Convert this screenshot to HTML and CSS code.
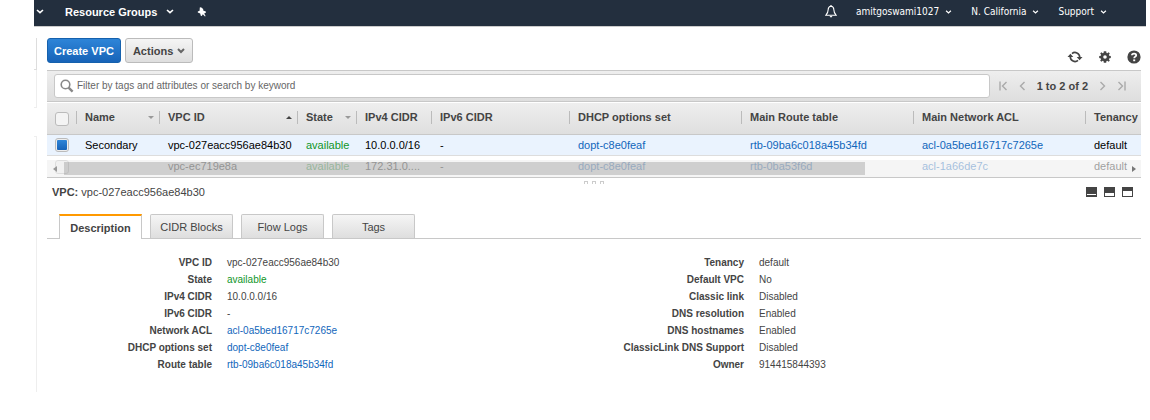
FILE: index.html
```html
<!DOCTYPE html>
<html lang="en">
<head>
<meta charset="utf-8">
<title>VPC Dashboard</title>
<link rel="stylesheet" href="styles.css">
</head>
<body>
<div class="page">
  <header class="topbar">
    <nav class="nav-left">
      <svg class="caret" viewBox="0 0 8 5"><path d="M1 1l3 2.6L7 1"/></svg>
      <button class="nav-main" type="button">Resource Groups <svg class="caret" viewBox="0 0 8 5"><path d="M1 1l3 2.6L7 1"/></svg></button>
      <button class="pin" type="button" aria-label="Pin shortcuts"><svg width="10" height="10" viewBox="0 0 10 10"><path d="M2.8 0.6L4 0.2 6.2 2 6.200 3.600 8.800 4.400 9 5.400 7.200 6.400 8.600 9 8 9.400 5.800 7.200 4.800 9 3.800 8.800 3.200 6.400 0.800 5.400 0.800 4.400 2.600 3.800z" fill="#fff"/></svg></button>
    </nav>
    <nav class="nav-right">
      <button class="bell" type="button" aria-label="Notifications"><svg width="12" height="13" viewBox="0 0 12 13"><path d="M6 1.2C3.9 1.4 3.2 3 3.2 4.6 3.2 7.2 2.4 8.6 0.8 10.3H11.2C9.6 8.6 8.8 7.2 8.8 4.6 8.8 3 8.1 1.4 6 1.2z" fill="none" stroke="#fff" stroke-width="1.1"/><path d="M4.5 11h3L6 12.8z" fill="#fff"/><path d="M5.4 0h1.2v1.6H5.4z" fill="#fff"/></svg></button>
      <button type="button">amitgoswami1027 <svg class="caret small" viewBox="0 0 8 5"><path d="M1 1l3 2.6L7 1"/></svg></button>
      <button type="button">N. California <svg class="caret small" viewBox="0 0 8 5"><path d="M1 1l3 2.6L7 1"/></svg></button>
      <button type="button">Support <svg class="caret small" viewBox="0 0 8 5"><path d="M1 1l3 2.6L7 1"/></svg></button>
    </nav>
  </header>
  <div class="body">
    <aside class="gutter"><div class="g-top"></div><div class="g-mid"></div><div class="g-rest"></div></aside>
    <main class="main">
      <div class="actions">
        <button class="btn primary" type="button">Create VPC</button>
        <button class="btn" type="button">Actions <svg width="8" height="6" viewBox="0 0 8 6"><path d="M1 1l3 3 3-3" fill="none" stroke="#666" stroke-width="2"/></svg></button>
        <div class="tools">
          <button type="button" aria-label="Refresh"><svg width="16" height="14" viewBox="0 0 16 14"><path d="M5 3.600A4.700 4.700 0 0 1 12.700 7M11 10.400A4.700 4.700 0 0 1 3.300 7" fill="none" stroke="#444" stroke-width="1.700"/><path d="M9.700 7h5.800l-2.900 3.200zM.5 7h5.800L3.400 3.800z" fill="#444"/></svg></button>
          <button type="button" aria-label="Settings"><svg width="12" height="12" viewBox="0 0 12 12"><path fill="#444" fill-rule="evenodd" d="M4.8 0.3h2.4l.3 1.6.8.3 1.4-.9 1.1 1.1-.9 1.4.3.9 1.6.2v2.2l-1.6.3-.3.9.9 1.3-1.1 1.1-1.4-.9-.8.3-.3 1.6H4.8l-.3-1.6-.8-.3-1.4.9-1.1-1.1.9-1.3-.3-.9L.2 7.1V4.9l1.6-.2.3-.9-.9-1.400 1.100-1.100 1.400.9.800-.3zM6 4.200a1.800 1.800 0 1 0 0 3.600 1.800 1.800 0 0 0 0-3.600z"/></svg></button>
          <button type="button" aria-label="Help"><svg width="14" height="14" viewBox="0 0 14 14"><circle cx="7" cy="7" r="6.6" fill="#444"/><path d="M4.900 5.300C5 3 9.200 3 9.200 5.200 9.200 6.700 7.200 6.600 7.200 8.300" fill="none" stroke="#fff" stroke-width="1.800"/><path d="M6.200 9.400h2v1.800h-2z" fill="#fff"/></svg></button>
        </div>
      </div>
      <div class="filter">
        <label class="search">
          <svg width="14" height="14" viewBox="0 0 14 14"><circle cx="5.500" cy="5.500" r="4.300" fill="none" stroke="#888" stroke-width="1.600"/><path d="M8.600 8.600l4 4" stroke="#888" stroke-width="2.400"/></svg>
          <input type="text" aria-label="Filter" placeholder="Filter by tags and attributes or search by keyword">
        </label>
        <div class="pager">
          <button type="button" aria-label="First page"><svg width="9" height="10" viewBox="0 0 9 10"><path d="M1 .5v9M7.500 1L3.500 5l4 4"/></svg></button>
          <button type="button" aria-label="Previous page"><svg width="7" height="10" viewBox="0 0 7 10"><path d="M5.500 1L1.500 5l4 4"/></svg></button>
          <span>1 to 2 of 2</span>
          <button type="button" aria-label="Next page"><svg width="7" height="10" viewBox="0 0 7 10"><path d="M1.500 1l4 4-4 4"/></svg></button>
          <button type="button" aria-label="Last page"><svg width="9" height="10" viewBox="0 0 9 10"><path d="M8 .5v9M1.500 1l4 4-4 4"/></svg></button>
        </div>
      </div>
      <div class="grid">
        <table class="vpcs">
          <colgroup><col class="c-check"><col class="c-name"><col class="c-id"><col class="c-state"><col class="c-v4"><col class="c-id"><col class="c-wide"><col class="c-wide"><col class="c-wide"><col></colgroup>
          <thead><tr>
            <th class="check"><input type="checkbox" aria-label="Select all"></th>
            <th><div>Name<i class="down"></i></div></th>
            <th><div>VPC ID<i class="up"></i></div></th>
            <th><div>State<i class="down"></i></div></th>
            <th><div>IPv4 CIDR</div></th>
            <th><div>IPv6 CIDR</div></th>
            <th><div>DHCP options set</div></th>
            <th><div>Main Route table</div></th>
            <th><div>Main Network ACL</div></th>
            <th><div>Tenancy</div></th>
          </tr></thead>
          <tbody>
            <tr class="selected"><td class="check"><input type="checkbox" aria-label="Select Secondary" checked></td><td>Secondary</td><td>vpc-027eacc956ae84b30</td><td class="ok">available</td><td>10.0.0.0/16</td><td>-</td><td><a href="#">dopt-c8e0feaf</a></td><td><a href="#">rtb-09ba6c018a45b34fd</a></td><td><a href="#">acl-0a5bed16717c7265e</a></td><td>default</td></tr>
            <tr><td class="check"><input type="checkbox" aria-label="Select vpc-ec719e8a"></td><td></td><td>vpc-ec719e8a</td><td class="ok">available</td><td>172.31.0....</td><td>-</td><td><a href="#">dopt-c8e0feaf</a></td><td><a href="#">rtb-0ba53f6d</a></td><td><a href="#">acl-1a66de7c</a></td><td>default</td></tr>
          </tbody>
        </table>
        <div class="scroll"><i class="s-left"></i><div class="thumb"></div><i class="s-right"></i></div>
      </div>
      <div class="grip"><i></i><i></i><i></i></div>
      <div class="title">
        <h1>VPC: <span>vpc-027eacc956ae84b30</span></h1>
        <div class="panes">
          <button type="button" aria-label="Small pane"><svg width="11" height="10" viewBox="0 0 11 10"><path d="M0 0h11v10H0z" fill="#444"/><path d="M1 7h9v1H1z" fill="#fff"/></svg></button>
          <button type="button" aria-label="Half pane"><svg width="11" height="10" viewBox="0 0 11 10"><path d="M0 0h11v10H0z" fill="#444"/><path d="M1 6h9v3H1z" fill="#fff"/></svg></button>
          <button type="button" aria-label="Full pane"><svg width="11" height="10" viewBox="0 0 11 10"><path d="M0 0h11v10H0z" fill="#444"/><path d="M1 4h9v5H1z" fill="#fff"/></svg></button>
        </div>
      </div>
      <div class="tabs" role="tablist">
        <button class="active" role="tab" type="button">Description</button>
        <button role="tab" type="button">CIDR Blocks</button>
        <button role="tab" type="button">Flow Logs</button>
        <button role="tab" type="button">Tags</button>
      </div>
      <div class="details">
        <dl>
          <dt>VPC ID</dt><dd>vpc-027eacc956ae84b30</dd>
          <dt>State</dt><dd class="ok">available</dd>
          <dt>IPv4 CIDR</dt><dd>10.0.0.0/16</dd>
          <dt>IPv6 CIDR</dt><dd>-</dd>
          <dt>Network ACL</dt><dd><a href="#">acl-0a5bed16717c7265e</a></dd>
          <dt>DHCP options set</dt><dd><a href="#">dopt-c8e0feaf</a></dd>
          <dt>Route table</dt><dd><a href="#">rtb-09ba6c018a45b34fd</a></dd>
        </dl>
        <dl>
          <dt>Tenancy</dt><dd>default</dd>
          <dt>Default VPC</dt><dd>No</dd>
          <dt>Classic link</dt><dd>Disabled</dd>
          <dt>DNS resolution</dt><dd>Enabled</dd>
          <dt>DNS hostnames</dt><dd>Enabled</dd>
          <dt>ClassicLink DNS Support</dt><dd>Disabled</dd>
          <dt>Owner</dt><dd>914415844393</dd>
        </dl>
      </div>
    </main>
  </div>
</div>
</body>
</html>
```

FILE: styles.css
```css
* { box-sizing: border-box; }
body { margin: 0; background: #fff; color: #444; font: 11px/16px "Liberation Sans", Arial, sans-serif; }
button { margin: 0; padding: 0; border: 0; background: none; color: inherit; font: inherit; cursor: pointer; }
svg { display: block; flex: none; }
a { color: #1166bb; text-decoration: none; }
.ok { color: #109628; }

.page { padding: 0 4px 0 34px; }
.topbar { display: flex; justify-content: space-between; height: 27px; padding: 0 39px 3px 2px; background: #232f3e; border-bottom: 1px solid #ccc; color: #fff; }
.nav-left, .nav-right, .nav-left button, .nav-right button { display: flex; align-items: center; }
.caret { width: 8px; height: 5px; fill: none; stroke: #fff; stroke-width: 1.6; }
.caret.small { width: 7px; height: 4px; }
.nav-main { gap: 9px; margin-left: 21px; font-weight: bold; }
.pin { margin-left: 23px; }
.nav-right { gap: 19px; font: 10px/16px "DejaVu Sans Condensed", "DejaVu Sans", sans-serif; }
.nav-right button { gap: 6px; }

.body { display: flex; gap: 10px; padding-right: 5px; }
.gutter { display: flex; flex-direction: column; flex: none; width: 3px; padding-top: 11px; }
.g-top { height: 32px; border: solid #ddd; border-width: 0 1px 1px 0; }
.g-mid { height: 38px; border: solid #eee; border-width: 0 1px 1px 0; }
.g-rest { flex: 1; margin-top: 28px; border: solid #eee; border-width: 1px 1px 0 0; }
.main { flex: 1; min-width: 0; }

.actions { display: flex; gap: 4px; height: 43px; padding-top: 11px; }
.btn { display: flex; align-items: center; justify-content: center; gap: 4px; height: 25px; padding: 0 7px; border: 1px solid #bbb; border-radius: 3px; background: linear-gradient(#f5f5f5, #dedede); font-weight: bold; }
.btn.primary { padding: 0 6px; border-color: #1561ad; background: linear-gradient(#2e85d8, #1763b8); color: #fff; }
.tools { display: flex; align-items: center; gap: 16px; margin-left: auto; padding-top: 6px; }

.filter { display: flex; align-items: center; height: 32px; padding: 0 15px 0 7px; border: solid #c8c8c8; border-width: 1px 0; background: linear-gradient(#eee, #dedede); }
.search { display: flex; flex: 1; align-items: center; gap: 3px; height: 24px; padding: 0 5px; border: 1px solid #c8c8c8; border-radius: 3px; background: #fff; }
.search input { flex: 1; min-width: 0; padding: 0; border: 0; outline: 0; background: none; color: #444; font: 10px/16px "Liberation Sans", Arial, sans-serif; }
.search input::placeholder { color: #666; }
.pager { display: flex; align-items: center; gap: 11px; padding-left: 9px; font-weight: bold; }
.pager path { fill: none; stroke: #aaa; stroke-width: 1.4; }

.grid { position: relative; margin-top: 1px; border-bottom: 1px solid #c8c8c8; }
.vpcs { width: 100%; table-layout: fixed; border-collapse: separate; border-spacing: 0; color: #000; white-space: nowrap; }
.c-check { width: 29px; }
.c-name { width: 83px; }
.c-id { width: 138px; }
.c-state { width: 59px; }
.c-v4 { width: 75px; }
.c-wide { width: 172px; }
.vpcs thead tr { background: linear-gradient(#eee, #dedede); }
.vpcs th { height: 32px; padding: 0 0 3px; border-bottom: 1px solid #c8c8c8; color: #444; text-align: left; }
.vpcs th div { display: flex; align-items: center; justify-content: space-between; height: 13px; padding: 0 5px 0 8px; border-left: 1px solid #bbb; }
.vpcs td { height: 21px; padding: 0 0 0 9px; border-bottom: 1px solid #ddd; line-height: 14px; }
.vpcs tbody tr:last-child td { padding-bottom: 2px; border-bottom: 0; }
.vpcs td.check, .vpcs tbody tr:last-child td.check { padding: 0 0 0 8px; }
.vpcs th.check { padding: 0 0 0 8px; }
.selected { background: #eaf3fe; }
.vpcs input { display: block; width: 14px; height: 14px; margin: 0; appearance: none; border: 1px solid #bbb; border-radius: 3px; background: #f4f4f4; }
.vpcs input:checked { padding: 1px; border-color: #bbb; background: linear-gradient(#2e85d8, #1763b8) content-box, #eee; }
.down, .up { border: 3px solid transparent; }
.down { border-top-color: #999; border-bottom: 0; }
.up { border-bottom-color: #444; border-top: 0; }
.scroll { position: absolute; left: 0; right: 0; bottom: 0; display: flex; align-items: center; height: 17px; padding: 0 5px 0 6px; background: rgba(240, 240, 240, .65); }
.thumb { width: 74%; height: 13px; margin-left: 7px; background: rgba(120, 120, 120, .3); }
.s-left, .s-right { border: 3px solid transparent; }
.s-left { border-right: 4px solid #999; border-left: 0; }
.s-right { margin-left: auto; border-left: 4px solid #777; border-right: 0; }

.grip { display: flex; justify-content: center; gap: 4px; height: 6px; padding-top: 3px; }
.grip i { width: 4px; height: 3px; border: 1px solid #ccc; border-bottom: 0; }
.title { display: flex; align-items: center; justify-content: space-between; padding: 0 8px 0 5px; }
.title h1 { margin: 0; font-size: 11px; line-height: 16px; }
.title span { font-weight: normal; }
.panes { display: flex; gap: 7px; }
.tabs { display: flex; gap: 8px; height: 25px; margin-top: 14px; padding-left: 12px; border-bottom: 1px solid #c8c8c8; }
.tabs button { width: 83px; height: 24px; border: 1px solid #c8c8c8; border-bottom: 0; border-radius: 2px 2px 0 0; background: linear-gradient(#f5f5f5, #dedede); }
.tabs .active { height: 25px; border-top: 2px solid #f90; border-radius: 0; background: #fff; font-weight: bold; }
.details { display: grid; grid-template-columns: 532px 1fr; padding-top: 15px; padding-bottom: 19px; font-size: 10px; line-height: 17px; }
.details dl { display: grid; grid-template-columns: 165px 1fr; column-gap: 15px; margin: 0; }
.details dt { font-weight: bold; text-align: right; }
.details dd { margin: 0; }
```
